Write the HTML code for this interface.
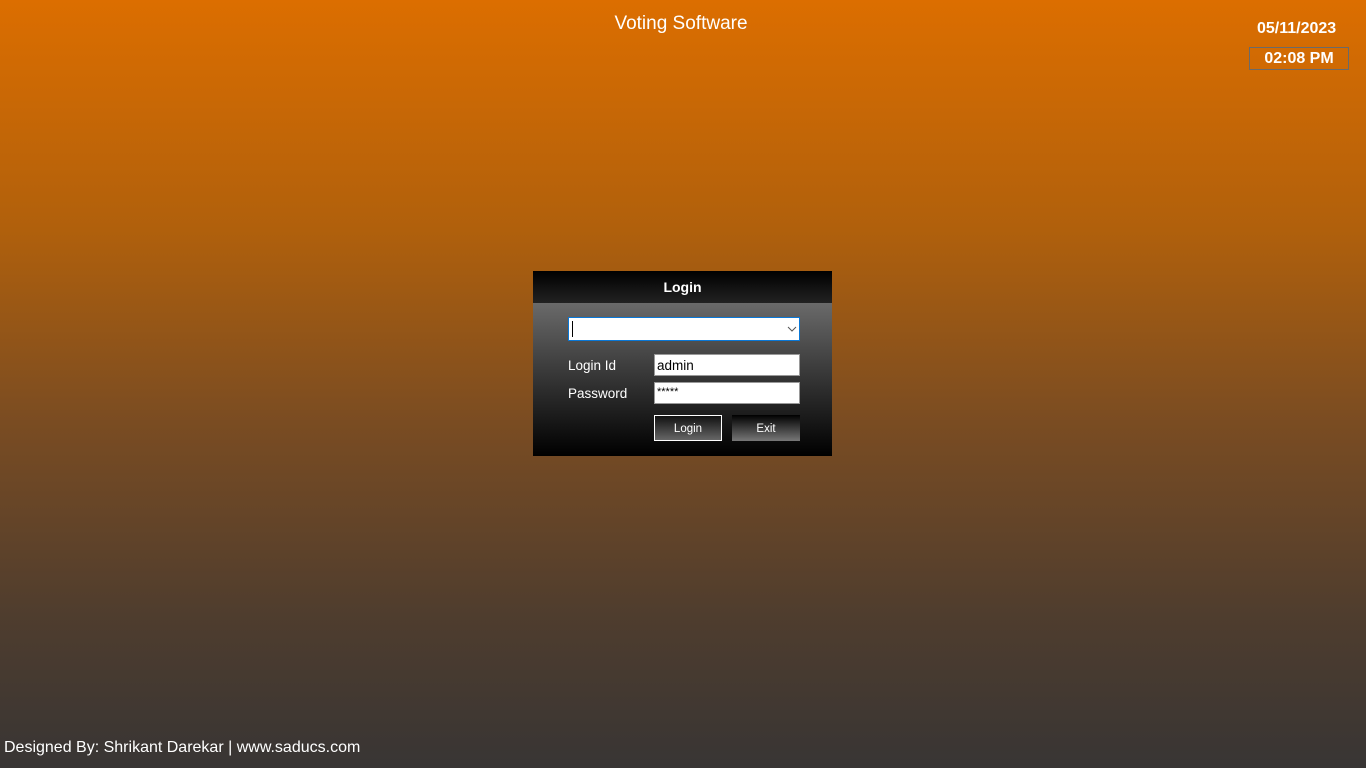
<!DOCTYPE html>
<html><head><style>
body{margin:0;width:1366px;height:768px;overflow:hidden;position:relative;font-family:"Liberation Sans",sans-serif;background:linear-gradient(#dc6e00 0%,#b0600c 30%,#7a4c22 55%,#4f3d2e 80%,#383534 100%);color:#fff}
.a{position:absolute}
</style></head><body>
<div class="a" style="left:0;width:1362px;top:13px;text-align:center;font-size:19px">Voting Software</div>
<div class="a" style="left:1257px;top:20px;font-size:16px;font-weight:bold">05/11/2023</div>
<div class="a" style="left:1249px;top:47px;width:98px;height:21px;border:1px solid #6a6a6a;text-align:center;font-size:16px;font-weight:bold;line-height:21px">02:08 PM</div>
<div class="a" style="left:533px;top:271px;width:299px;height:185px;background:linear-gradient(#6a6a6a 32px,#3a3a3a 100px,#000 185px)">
 <div style="height:32px;background:linear-gradient(#000,#222);text-align:center;font-weight:bold;font-size:14px;line-height:32px">Login</div>
 <div class="a" style="left:35px;top:46px;width:230px;height:22px;background:#fff;border:1px solid #0a78d7">
  <div class="a" style="left:3px;top:3px;width:1px;height:16px;background:#000"></div>
  <svg class="a" style="left:218px;top:8px" width="10" height="7"><path d="M1 1L5 5L9 1" stroke="#555" fill="none"/></svg>
 </div>
 <div class="a" style="left:35px;top:87px;font-size:13.5px">Login Id</div>
 <div class="a" style="left:35px;top:115px;font-size:13.5px">Password</div>
 <div class="a" style="left:121px;top:83px;width:142px;height:20px;background:#fff;border:1px solid #999;color:#000;font-size:13.5px;line-height:22px;padding-left:2px">admin</div>
 <div class="a" style="left:121px;top:111px;width:142px;height:20px;background:#fff;border:1px solid #999;color:#000;font-size:11px;line-height:18px;padding-left:2px">*****</div>
 <div class="a" style="left:121px;top:144px;width:66px;height:24px;border:1px solid #fff;background:linear-gradient(#111,#666);font-size:11.5px;text-align:center;line-height:26px">Login</div>
 <div class="a" style="left:199px;top:144px;width:68px;height:26px;background:linear-gradient(#000,#777);font-size:11.5px;text-align:center;line-height:28px">Exit</div>
</div>
<div class="a" style="left:4px;top:739px;font-size:16px">Designed By: Shrikant Darekar | www.saducs.com</div>
</body></html>
